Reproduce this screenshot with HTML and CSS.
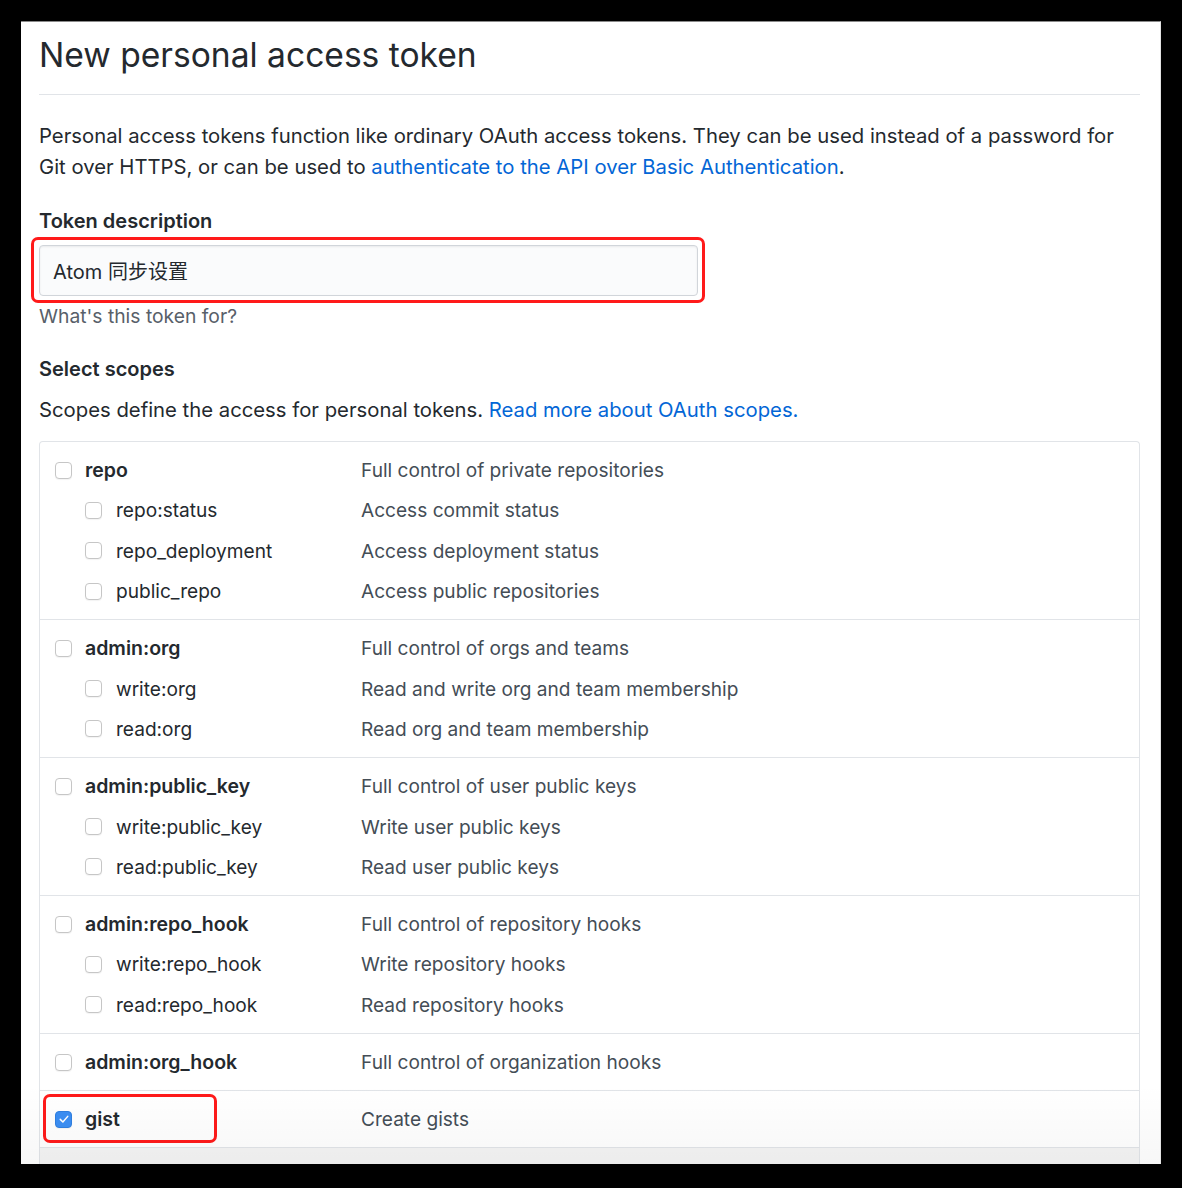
FILE: index.html
```html
<!DOCTYPE html>
<html lang="en">
<head>
<meta charset="utf-8">
<title>New personal access token</title>
<link rel="stylesheet" href="styles.css">
</head>
<body>
<div class="page">
  <h1 class="title">New personal access token</h1>
  <p class="intro">Personal access tokens function like ordinary OAuth access tokens. They can be used instead of a password for<br>Git over HTTPS, or can be used to <a href="#" class="link">authenticate to the API over Basic Authentication</a>.</p>

  <label class="label">Token description</label>
  <div class="input-wrap">
    <div class="input">Atom 同步设置</div>
    <div class="annot annot-input"></div>
  </div>
  <p class="note">What's this token for?</p>

  <h3 class="label label-scopes">Select scopes</h3>
  <p class="scopes-text">Scopes define the access for personal tokens. <a href="#" class="link">Read more about OAuth scopes.</a></p>

  <div class="scopes">
    <div class="group">
      <div class="row"><span class="cb"></span><span class="name main">repo</span><span class="desc">Full control of private repositories</span></div>
      <div class="row sub"><span class="cb"></span><span class="name">repo:status</span><span class="desc">Access commit status</span></div>
      <div class="row sub"><span class="cb"></span><span class="name">repo_deployment</span><span class="desc">Access deployment status</span></div>
      <div class="row sub"><span class="cb"></span><span class="name">public_repo</span><span class="desc">Access public repositories</span></div>
    </div>
    <div class="group">
      <div class="row"><span class="cb"></span><span class="name main">admin:org</span><span class="desc">Full control of orgs and teams</span></div>
      <div class="row sub"><span class="cb"></span><span class="name">write:org</span><span class="desc">Read and write org and team membership</span></div>
      <div class="row sub"><span class="cb"></span><span class="name">read:org</span><span class="desc">Read org and team membership</span></div>
    </div>
    <div class="group">
      <div class="row"><span class="cb"></span><span class="name main">admin:public_key</span><span class="desc">Full control of user public keys</span></div>
      <div class="row sub"><span class="cb"></span><span class="name">write:public_key</span><span class="desc">Write user public keys</span></div>
      <div class="row sub"><span class="cb"></span><span class="name">read:public_key</span><span class="desc">Read user public keys</span></div>
    </div>
    <div class="group">
      <div class="row"><span class="cb"></span><span class="name main">admin:repo_hook</span><span class="desc">Full control of repository hooks</span></div>
      <div class="row sub"><span class="cb"></span><span class="name">write:repo_hook</span><span class="desc">Write repository hooks</span></div>
      <div class="row sub"><span class="cb"></span><span class="name">read:repo_hook</span><span class="desc">Read repository hooks</span></div>
    </div>
    <div class="group">
      <div class="row"><span class="cb"></span><span class="name main">admin:org_hook</span><span class="desc">Full control of organization hooks</span></div>
    </div>
    <div class="group group-gist">
      <div class="row"><span class="cb checked"><svg viewBox="0 0 16 16" width="12" height="12"><path d="M3 8.5 L6.5 12 L13 4.5" fill="none" stroke="#fff" stroke-width="2" stroke-linecap="round" stroke-linejoin="round"/></svg></span><span class="name main">gist</span><span class="desc">Create gists</span></div>
      <div class="annot annot-gist"></div>
    </div>
    <div class="group group-next">
      <div class="row"></div>
    </div>
  </div>
  <div class="fade"></div>
</div>
</body>
</html>
```
FILE: styles.css
```css
html, body {
  margin: 0;
  padding: 0;
  background: #000;
}

body {
  width: 1182px;
  height: 1188px;
  overflow: hidden;
  font-family: Inter, "Liberation Sans", Arial, "Noto Sans CJK SC", sans-serif;
  color: #24292e;
}

.page {
  position: relative;
  box-sizing: border-box;
  margin: 21px 0 0 21px;
  width: 1140px;
  height: 1143px;
  padding: 12px 20px 0 18px;
  background: #fff;
  border-top: 1px solid #8a8a8a;
  border-right: 1px solid #e4e4e4;
  overflow: hidden;
}

.title {
  margin: 0;
  font-size: 33.6px;
  font-weight: 400;
  line-height: 42px;
  padding-bottom: 18px;
  border-bottom: 1px solid #e1e4e8;
  color: #24292e;
}

.intro {
  margin: 25px 0 0;
  font-size: 20.3px;
  line-height: 31px;
  color: #24292e;
}

.link {
  color: #0366d6;
  text-decoration: none;
}

.label {
  display: block;
  margin: 24px 0 0;
  font-size: 20px;
  line-height: 31px;
  font-weight: 600;
  color: #24292e;
}

.input-wrap {
  position: relative;
  margin-top: 8px;
  width: 659px;
}

.input {
  box-sizing: border-box;
  height: 51px;
  display: flex;
  align-items: center;
  padding-left: 13px;
  font-size: 20px;
  background: #fafbfc;
  border: 1px solid #d1d5da;
  border-radius: 4px;
  box-shadow: inset 0 1px 2px rgba(27, 31, 35, 0.075);
  color: #24292e;
}

.annot {
  position: absolute;
  border: 3px solid #ff1a1a;
  border-radius: 7px;
  pointer-events: none;
}

.annot-input {
  left: -8px;
  top: -8px;
  right: -7px;
  bottom: -7px;
}

.note {
  margin: 6px 0 0;
  font-size: 19.3px;
  line-height: 28px;
  color: #586069;
}

.label-scopes {
  margin-top: 24px;
}

.scopes-text {
  margin: 9px 0 0;
  font-size: 20.3px;
  line-height: 31px;
  color: #24292e;
}

.scopes {
  margin-top: 16px;
  border: 1px solid #e1e4e8;
  border-bottom: 0;
  border-radius: 4px 4px 0 0;
}

.group {
  position: relative;
  padding: 8px 0;
  border-top: 1px solid #e1e4e8;
}

.group:first-child {
  border-top: 0;
}

.row {
  display: flex;
  align-items: center;
  height: 40.3px;
  padding-left: 15px;
  font-size: 19.1px;
}

.cb {
  box-sizing: border-box;
  flex: none;
  width: 17px;
  height: 17px;
  border: 1px solid #c6c6c6;
  border-radius: 4px;
  background: #fff;
  box-shadow: 0 1px 1px rgba(0, 0, 0, 0.05);
  display: flex;
  align-items: center;
  justify-content: center;
}

.cb.checked {
  background: #3b8ef3;
  border-color: #2f7fe0;
}

.name {
  margin-left: 13px;
  width: 276px;
  flex: none;
  color: #24292e;
}

.name.main {
  font-weight: 600;
  font-size: 19.5px;
}

.row.sub .cb {
  margin-left: 30px;
}

.row.sub .name {
  margin-left: 14px;
  width: 245px;
}

.desc {
  color: #444d56;
}

.annot-gist {
  left: 3px;
  top: 3px;
  width: 174px;
  height: 49px;
  box-sizing: border-box;
}

.group-next {
  background: #f4f4f4;
}

.fade {
  position: absolute;
  left: 0;
  right: 0;
  bottom: 0;
  height: 80px;
  background: linear-gradient(rgba(0, 0, 0, 0), rgba(0, 0, 0, 0.03));
  pointer-events: none;
}
```
